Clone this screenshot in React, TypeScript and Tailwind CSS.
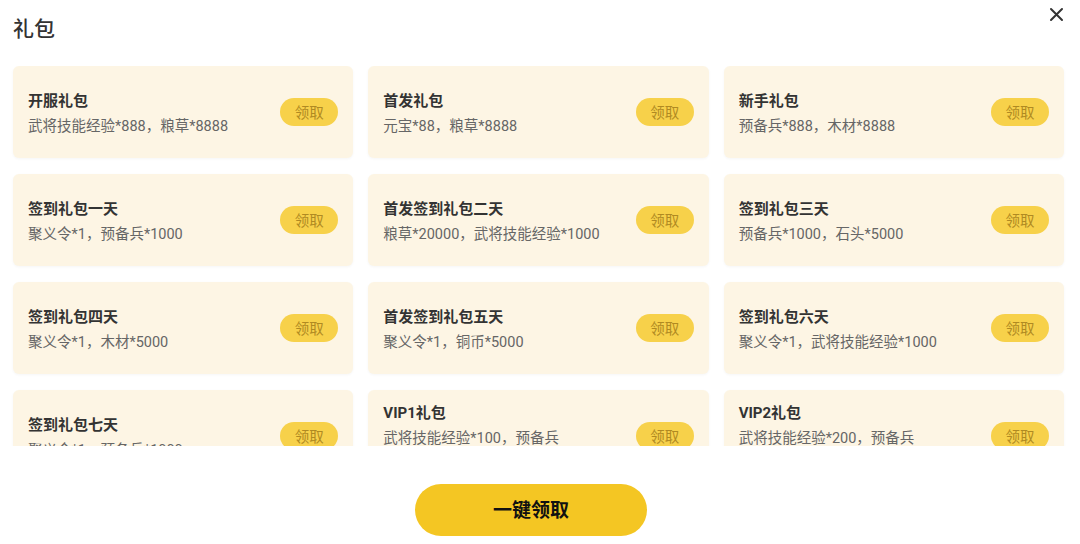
const GIFTS = [
  { title: "开服礼包", desc: ["武将技能经验*888，粮草*8888"] },
  { title: "首发礼包", desc: ["元宝*88，粮草*8888"] },
  { title: "新手礼包", desc: ["预备兵*888，木材*8888"] },
  { title: "签到礼包一天", desc: ["聚义令*1，预备兵*1000"] },
  { title: "首发签到礼包二天", desc: ["粮草*20000，武将技能经验*1000"] },
  { title: "签到礼包三天", desc: ["预备兵*1000，石头*5000"] },
  { title: "签到礼包四天", desc: ["聚义令*1，木材*5000"] },
  { title: "首发签到礼包五天", desc: ["聚义令*1，铜币*5000"] },
  { title: "签到礼包六天", desc: ["聚义令*1，武将技能经验*1000"] },
  { title: "签到礼包七天", desc: ["聚义令*1，预备兵*1000"] },
  { title: "VIP1礼包", desc: ["武将技能经验*100，预备兵", "*1000"] },
  { title: "VIP2礼包", desc: ["武将技能经验*200，预备兵", "*2000"] },
];

function GiftCard({ title, desc }: { title: string; desc: string[] }) {
  return (
    <div className="flex h-[92px] items-center justify-between rounded-[6px] bg-[#fdf5e4] pl-[15px] pr-[15px] shadow-[0_1px_3px_rgba(0,0,0,0.04)]">
      <div className="min-w-0 pt-[4px]">
        <div className="text-[15px] font-bold leading-[25px] text-[#333]">{title}</div>
        {desc.map((line) => (
          <div key={line} className="text-[14.5px] leading-[25px] text-[#666]">
            {line}
          </div>
        ))}
      </div>
      <button className="h-[28px] w-[58px] shrink-0 rounded-full bg-[#f7d14a] pt-[3px] text-[14.5px] leading-[25px] text-[#b08a22]">
        领取
      </button>
    </div>
  );
}

export default function App() {
  return (
    <div
      className="flex h-[544px] w-[1080px] flex-col bg-white"
      style={{ fontFamily: 'Roboto, "Noto Sans CJK SC", "Noto Sans", sans-serif' }}
    >
      <div className="flex h-[66px] shrink-0 items-start justify-between pl-[13px] pr-[16px]">
        <h1 className="mt-[14px] text-[21px] font-medium leading-[30px] text-[#333]">礼包</h1>
        <svg className="mt-[7px]" width="15" height="15" viewBox="0 0 15 15">
          <path d="M2 2 L13 13 M13 2 L2 13" stroke="#333" strokeWidth="2" strokeLinecap="round" />
        </svg>
      </div>
      <div className="h-[380px] shrink-0 overflow-hidden">
        <div className="grid grid-cols-3 gap-x-[15px] gap-y-[16px] pl-[13px] pr-[16px]">
          {GIFTS.map((g) => (
            <GiftCard key={g.title} title={g.title} desc={g.desc} />
          ))}
        </div>
      </div>
      <div className="flex justify-center pr-[18px] pt-[38px]">
        <button className="h-[52px] w-[232px] rounded-full bg-[#f4c623] pt-[2px] text-[19px] font-bold text-[#111]">
          一键领取
        </button>
      </div>
    </div>
  );
}
